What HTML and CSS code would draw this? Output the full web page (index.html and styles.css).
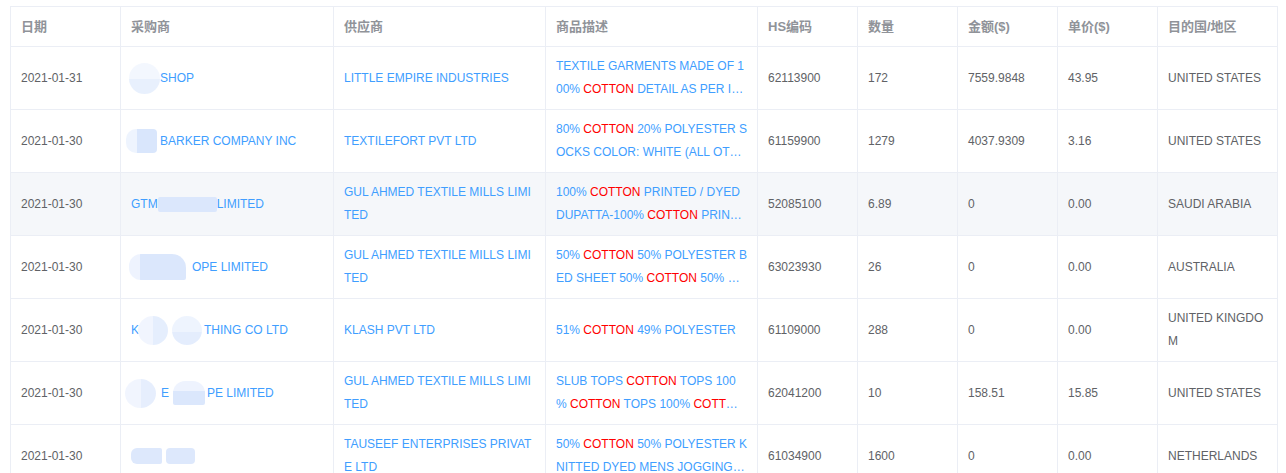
FILE: index.html
```html
<!DOCTYPE html>
<html lang="zh">
<head>
<meta charset="utf-8">
<title>Trade records</title>
<link rel="stylesheet" href="styles.css">
</head>
<body>
<div class="page">
<table class="grid">
  <colgroup>
    <col class="w110"><col class="w213"><col class="w212"><col class="w212">
    <col class="w100"><col class="w100"><col class="w100"><col class="w100"><col class="w120">
  </colgroup>
  <thead>
    <tr>
      <th><div class="cell">日期</div></th>
      <th><div class="cell">采购商</div></th>
      <th><div class="cell">供应商</div></th>
      <th><div class="cell">商品描述</div></th>
      <th><div class="cell">HS编码</div></th>
      <th><div class="cell">数量</div></th>
      <th><div class="cell">金额($)</div></th>
      <th><div class="cell">单价($)</div></th>
      <th><div class="cell">目的国/地区</div></th>
    </tr>
  </thead>
  <tbody>
    <tr>
      <td><div class="cell">2021-01-31</div></td>
      <td><div class="cell link"><span class="blob round b1"></span>SHOP</div></td>
      <td><div class="cell link clamp">LITTLE EMPIRE INDUSTRIES</div></td>
      <td><div class="cell link clamp">TEXTILE GARMENTS MADE OF 100% <em>COTTON</em> DETAIL AS PER INVOICE AND PACKING LIST</div></td>
      <td><div class="cell">62113900</div></td>
      <td><div class="cell">172</div></td>
      <td><div class="cell">7559.9848</div></td>
      <td><div class="cell">43.95</div></td>
      <td><div class="cell">UNITED STATES</div></td>
    </tr>
    <tr>
      <td><div class="cell">2021-01-30</div></td>
      <td><div class="cell link"><span class="blob b2"></span>BARKER COMPANY INC</div></td>
      <td><div class="cell link clamp">TEXTILEFORT PVT LTD</div></td>
      <td><div class="cell link clamp">80% <em>COTTON</em> 20% POLYESTER SOCKS COLOR: WHITE (ALL OTHER DETAILS AS PER INVOICE)</div></td>
      <td><div class="cell">61159900</div></td>
      <td><div class="cell">1279</div></td>
      <td><div class="cell">4037.9309</div></td>
      <td><div class="cell">3.16</div></td>
      <td><div class="cell">UNITED STATES</div></td>
    </tr>
    <tr class="hover">
      <td><div class="cell">2021-01-30</div></td>
      <td><div class="cell link">GTM<span class="blob b3"></span>LIMITED</div></td>
      <td><div class="cell link clamp">GUL AHMED TEXTILE MILLS LIMITED</div></td>
      <td><div class="cell link clamp">100% <em>COTTON</em> PRINTED / DYED DUPATTA-100% <em>COTTON</em> PRINTED DUPATTA</div></td>
      <td><div class="cell">52085100</div></td>
      <td><div class="cell">6.89</div></td>
      <td><div class="cell">0</div></td>
      <td><div class="cell">0.00</div></td>
      <td><div class="cell">SAUDI ARABIA</div></td>
    </tr>
    <tr>
      <td><div class="cell">2021-01-30</div></td>
      <td><div class="cell link"><span class="blob b4"></span>OPE LIMITED</div></td>
      <td><div class="cell link clamp">GUL AHMED TEXTILE MILLS LIMITED</div></td>
      <td><div class="cell link clamp">50% <em>COTTON</em> 50% POLYESTER BED SHEET 50% <em>COTTON</em> 50% POLYESTER</div></td>
      <td><div class="cell">63023930</div></td>
      <td><div class="cell">26</div></td>
      <td><div class="cell">0</div></td>
      <td><div class="cell">0.00</div></td>
      <td><div class="cell">AUSTRALIA</div></td>
    </tr>
    <tr>
      <td><div class="cell">2021-01-30</div></td>
      <td><div class="cell link">K<span class="blob round b5a"></span><span class="blob round b5b"></span>THING CO LTD</div></td>
      <td><div class="cell link clamp">KLASH PVT LTD</div></td>
      <td><div class="cell link clamp">51% <em>COTTON</em> 49% POLYESTER</div></td>
      <td><div class="cell">61109000</div></td>
      <td><div class="cell">288</div></td>
      <td><div class="cell">0</div></td>
      <td><div class="cell">0.00</div></td>
      <td><div class="cell">UNITED KINGDOM</div></td>
    </tr>
    <tr>
      <td><div class="cell">2021-01-30</div></td>
      <td><div class="cell link"><span class="blob round b6a"></span>E<span class="blob b6b"></span>PE LIMITED</div></td>
      <td><div class="cell link clamp">GUL AHMED TEXTILE MILLS LIMITED</div></td>
      <td><div class="cell link clamp">SLUB TOPS <em>COTTON</em> TOPS 100 % <em>COTTON</em> TOPS 100% <em>COTTON</em> TOPS</div></td>
      <td><div class="cell">62041200</div></td>
      <td><div class="cell">10</div></td>
      <td><div class="cell">158.51</div></td>
      <td><div class="cell">15.85</div></td>
      <td><div class="cell">UNITED STATES</div></td>
    </tr>
    <tr>
      <td><div class="cell">2021-01-30</div></td>
      <td><div class="cell link"><span class="blob b7a"></span><span class="blob b7b"></span></div></td>
      <td><div class="cell link clamp">TAUSEEF ENTERPRISES PRIVATE LTD</div></td>
      <td><div class="cell link clamp">50% <em>COTTON</em> 50% POLYESTER KNITTED DYED MENS JOGGING SUITS</div></td>
      <td><div class="cell">61034900</div></td>
      <td><div class="cell">1600</div></td>
      <td><div class="cell">0</div></td>
      <td><div class="cell">0.00</div></td>
      <td><div class="cell">NETHERLANDS</div></td>
    </tr>
  </tbody>
</table>
</div>
</body>
</html>
```

FILE: styles.css
```css
html, body {
  margin: 0;
  padding: 0;
  background: #fff;
}
body {
  font-family: "Liberation Sans", Arial, "Noto Sans CJK SC", sans-serif;
  font-size: 12px;
  color: #606266;
}
.page {
  padding: 6px 9px 0 10px;
}
.grid {
  width: 1267px;
  table-layout: fixed;
  border-collapse: collapse;
  border: 1px solid #ebeef5;
}
.w110 { width: 110px; }
.w213 { width: 213px; }
.w212 { width: 212px; }
.w100 { width: 100px; }
.w120 { width: 120px; }

th, td {
  padding: 8px 0;
  border: 1px solid #ebeef5;
  vertical-align: middle;
  text-align: left;
}
th {
  font-size: 13px;
  font-weight: bold;
  color: #909399;
}
.cell {
  padding: 0 10px;
  line-height: 23px;
  word-break: break-all;
}
.hover td {
  background: #f5f7fa;
}
.link {
  color: #409eff;
}
.clamp {
  display: -webkit-box;
  -webkit-box-orient: vertical;
  -webkit-line-clamp: 2;
  overflow: hidden;
}
em {
  font-style: normal;
  color: #ff0000;
}
.blob {
  display: inline-block;
  vertical-align: middle;
  background: #dfe9fc;
}
.round {
  border-radius: 50%;
}
.b1 {
  width: 31px;
  height: 31px;
  margin: -5px 0 -5px -2px;
  background: linear-gradient(#f3f7fe 0 50%, #e8f0fd 50%);
}
.b2 {
  width: 31px;
  height: 24px;
  margin: -2px 3px -2px -5px;
  border-radius: 10px 4px 4px 10px;
  background: linear-gradient(90deg, #eef4fe 0 35%, #d9e6fc 35%);
}
.b3 {
  width: 59px;
  height: 15px;
  background: #dbe7fc;
  border-radius: 2px;
}
.b4 {
  width: 57px;
  height: 26px;
  margin: -3px 6px -3px -2px;
  border-radius: 12px 14px 2px 12px;
  background: linear-gradient(90deg, #eef3fe 0 20%, #dbe7fc 20%);
}
.b5a {
  width: 30px;
  height: 29px;
  margin: -4px 4px -4px -1px;
  background: linear-gradient(90deg, #f1f5fe 0 50%, #e5eefd 50%);
}
.b5b {
  width: 30px;
  height: 29px;
  margin: -4px 2px -4px 0;
  background: linear-gradient(#eef4fe 0 55%, #e4edfd 55%);
}
.b6a {
  width: 31px;
  height: 29px;
  margin: -4px 5px -4px -6px;
  background: linear-gradient(90deg, #f1f5fe 0 50%, #e6eefd 50%);
}
.b6b {
  width: 32px;
  height: 24px;
  margin: -2px 2px -2px 4px;
  border-radius: 12px 12px 2px 2px;
  background: linear-gradient(#eef3fe 0 40%, #dbe7fc 40%);
}
.b7a {
  width: 31px;
  height: 16px;
  margin-right: 4px;
  border-radius: 6px 2px 2px 6px;
  background: #dde8fc;
}
.b7b {
  width: 29px;
  height: 16px;
  border-radius: 4px;
  background: #dde8fc;
}
```
